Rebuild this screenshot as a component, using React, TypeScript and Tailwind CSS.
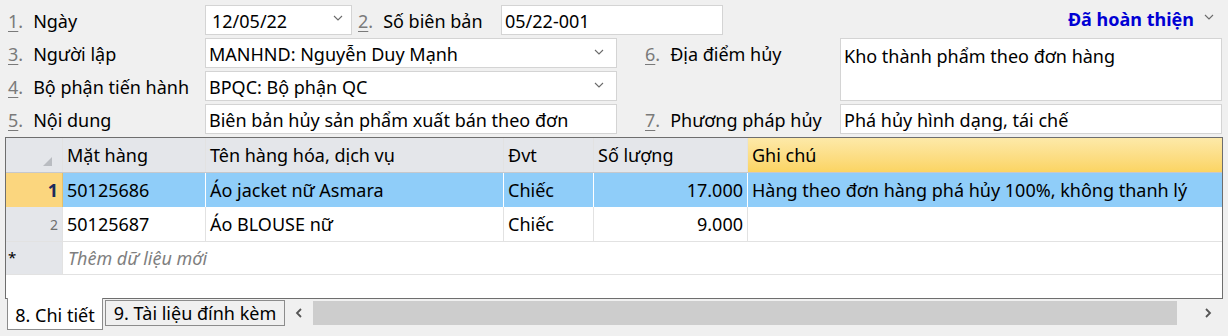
import React from "react";

const font = "font-['Noto_Sans','Open_Sans',sans-serif]";

function Chevron({ className = "" }: { className?: string }) {
  return (
    <svg width="10" height="6" viewBox="0 0 10 6" className={className}>
      <path d="M1 1 L5 5 L9 1" fill="none" stroke="#6b6b6b" strokeWidth="1.1" />
    </svg>
  );
}

function Label({ num, text }: { num: string; text: string }) {
  return (
    <div className="flex items-center h-[30px] pt-[3px] text-black whitespace-nowrap">
      <span className="text-[#7a7a7a] underline underline-offset-[3px] decoration-[#7a7a7a]">{num}</span>
      <span className="text-[#7a7a7a]">.</span>
      <span className="ml-[10px]">{text}</span>
    </div>
  );
}

function Field({ value, combo, tall }: { value: string; combo?: boolean; tall?: boolean }) {
  return (
    <div
      className={`flex ${tall ? "items-start pt-[4px] h-[63px] row-span-2" : "items-center pt-[2px] h-[30px]"} bg-white border border-[#d4d4d4] pl-[3px] pr-[12px] text-black whitespace-nowrap overflow-hidden`}
    >
      <span className="flex-1 overflow-hidden">{value}</span>
      {combo && <Chevron className="-mt-[4px]" />}
    </div>
  );
}

const cols = ["w-[57px]", "w-[143px]", "w-[298px]", "w-[90px]", "w-[154px]", "flex-1"];

function Cell({ w, children, right, className = "" }: { w: string; children?: React.ReactNode; right?: boolean; className?: string }) {
  return (
    <div
      className={`${w} h-full flex items-center border-r border-[#e2e2e2] px-[4px] whitespace-nowrap overflow-hidden ${right ? "justify-end" : ""} ${className}`}
    >
      {children}
    </div>
  );
}

export default function App() {
  return (
    <div className={`w-[1228px] h-[336px] bg-[#f0f0f0] ${font} text-[18px] overflow-hidden`}>
      {/* row 1 */}
      <div className="flex items-center pt-[5px] pl-[8px] pr-[10px]">
        <div className="w-[197px]">
          <Label num="1" text="Ngày" />
        </div>
        <div className="w-[147px] h-[30px] flex items-center pt-[2px] bg-white border border-[#d4d4d4] pl-[6px] pr-[8px]">
          <span className="flex-1">12/05/22</span>
          <Chevron className="-mt-[6px]" />
        </div>
        <div className="w-[149px] pl-[6px]">
          <Label num="2" text="Số biên bản" />
        </div>
        <div className="w-[222px] h-[30px] flex items-center pt-[2px] bg-white border border-[#d4d4d4] pl-[3px]">05/22-001</div>
        <div className="flex-1 flex items-center justify-end gap-[10px] pr-[4px] pb-[2px]">
          <span className="font-bold text-[#0000d4]">Đã hoàn thiện</span>
          <Chevron className="-mt-[4px]" />
        </div>
      </div>

      {/* rows 2-4 */}
      <div className="grid grid-cols-[197px_412px_28px_195px_382px] grid-rows-[30px_30px_30px] gap-y-[3px] pl-[8px] mt-[3px]">
        <Label num="3" text="Người lập" />
        <Field value="MANHND: Nguyễn Duy Mạnh" combo />
        <div />
        <Label num="6" text="Địa điểm hủy" />
        <Field value="Kho thành phẩm theo đơn hàng" tall />

        <Label num="4" text="Bộ phận tiến hành" />
        <Field value="BPQC: Bộ phận QC" combo />
        <div />
        <div />

        <Label num="5" text="Nội dung" />
        <Field value="Biên bản hủy sản phẩm xuất bán theo đơn" />
        <div />
        <Label num="7" text="Phương pháp hủy" />
        <Field value="Phá hủy hình dạng, tái chế" />
      </div>

      {/* grid */}
      <div className="ml-[5px] mt-[3px] w-[1218px] h-[162px] bg-white border border-[#6e6e6e] flex flex-col">
        <div className="h-[35px] flex bg-[#e4e6ea] border-b border-[#c6c8cc]">
          <Cell w={cols[0]} className="justify-end items-end pb-[6px] pr-[10px] border-[#c9cbcf]">
            <svg width="9" height="9" viewBox="0 0 9 9">
              <path d="M9 0 L9 9 L0 9 Z" fill="#b9bcc1" />
            </svg>
          </Cell>
          <Cell w={cols[1]} className="border-[#c9cbcf]">Mặt hàng</Cell>
          <Cell w={cols[2]} className="border-[#c9cbcf]">Tên hàng hóa, dịch vụ</Cell>
          <Cell w={cols[3]} className="border-[#c9cbcf]">Đvt</Cell>
          <Cell w={cols[4]} className="border-[#c9cbcf]">Số lượng</Cell>
          <Cell w={cols[5]} className="bg-gradient-to-b from-[#fde9a8] to-[#fbd462] border-r-0">Ghi chú</Cell>
        </div>
        <div className="h-[34px] flex bg-[#8fcdf9]">
          <Cell w={cols[0]} right className="bg-[#fbd67e] border-[#e6c06a] font-bold text-[#1c2a5c]">1</Cell>
          <Cell w={cols[1]} className="border-white">50125686</Cell>
          <Cell w={cols[2]} className="border-white">Áo jacket nữ Asmara</Cell>
          <Cell w={cols[3]} className="border-white">Chiếc</Cell>
          <Cell w={cols[4]} right className="border-white">17.000</Cell>
          <Cell w={cols[5]} className="border-r-0">Hàng theo đơn hàng phá hủy 100%, không thanh lý</Cell>
        </div>
        <div className="h-[35px] flex border-b border-[#e2e2e2]">
          <Cell w={cols[0]} right className="bg-[#e4e6ea] border-[#c9cbcf] text-[14px] text-[#6f6f6f]">2</Cell>
          <Cell w={cols[1]}>50125687</Cell>
          <Cell w={cols[2]}>Áo BLOUSE nữ</Cell>
          <Cell w={cols[3]}>Chiếc</Cell>
          <Cell w={cols[4]} right>9.000</Cell>
          <Cell w={cols[5]} className="border-r-0" />
        </div>
        <div className="h-[33px] flex border-b border-[#e2e2e2]">
          <Cell w={cols[0]} className="bg-[#e4e6ea] border-[#c9cbcf] pl-[2px] text-[15px] items-start pt-[4px]">*</Cell>
          <div className="flex-1 flex items-center pl-[5px] italic text-[#7f7f7f]">Thêm dữ liệu mới</div>
        </div>
        <div className="flex-1" />
      </div>

      {/* tabs + scroll */}
      <div className="flex items-start ml-[7px] mr-[5px] h-[32px]">
        <div className="w-[96px] h-[32px] -mt-[1px] bg-white border border-t-0 border-[#8c8c8c] flex items-center justify-center pt-[3px] relative z-10">
          8. Chi tiết
        </div>
        <div className="ml-[2px] mt-[1px] w-[180px] h-[26px] border border-[#8c8c8c] flex items-center justify-center">
          9. Tài liệu đính kèm
        </div>
        <div className="w-[28px] h-[26px] mt-[1px] flex items-center justify-center">
          <svg width="8" height="10" viewBox="0 0 8 10">
            <path d="M6 1 L2 5 L6 9" fill="none" stroke="#555" strokeWidth="1.8" />
          </svg>
        </div>
        <div className="w-[864px] h-[24px] mt-[2px] bg-[#cdcdcd]" />
        <div className="flex-1 h-[26px] mt-[1px] flex items-center justify-center pl-[16px]">
          <svg width="8" height="10" viewBox="0 0 8 10">
            <path d="M2 1 L6 5 L2 9" fill="none" stroke="#555" strokeWidth="1.8" />
          </svg>
        </div>
      </div>
    </div>
  );
}
